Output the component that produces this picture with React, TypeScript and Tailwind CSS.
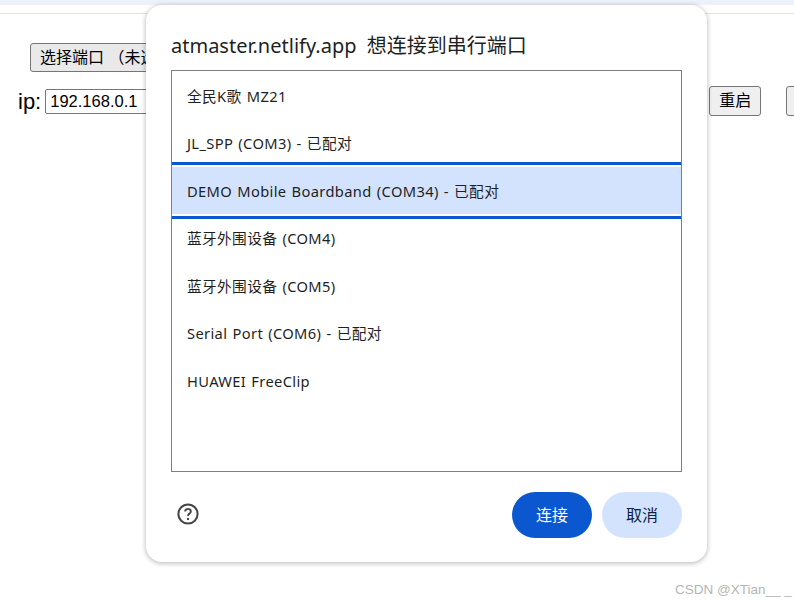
import React from 'react';

const ports = [
  '全民K歌 MZ21',
  'JL_SPP (COM3) - 已配对',
  'DEMO Mobile Boardband (COM34) - 已配对',
  '蓝牙外围设备 (COM4)',
  '蓝牙外围设备 (COM5)',
  'Serial Port (COM6) - 已配对',
  'HUAWEI FreeClip',
];

const uiFont = "font-['Noto_Sans','Noto_Sans_CJK_SC',sans-serif]";
const pageFont = "font-['Liberation_Sans','Noto_Sans_CJK_SC',sans-serif]";

const PortDialog = () => (
  <div
    className={`absolute left-[146px] top-[5px] w-[561px] h-[557px] bg-white rounded-[16px] shadow-[0_1px_4px_1px_rgba(0,0,0,0.22)] px-[25px] ${uiFont}`}
    role="dialog"
    aria-modal="true"
  >
    <h1 className="h-[65px] pt-[24px] text-[20px] leading-[34px] [word-spacing:5px] text-[#1f1f1f] whitespace-nowrap">
      atmaster.netlify.app 想连接到串行端口
    </h1>
    <div className="w-[511px] h-[402px] border border-[#7f7f7f] pt-[1px]">
      {ports.map((port, i) => (
        <div
          key={port}
          className="relative h-[47.5px] flex items-center px-[15px] text-[14.7px] tracking-[0.35px] [word-spacing:1px] text-[#1f1f1f] whitespace-nowrap"
        >
          {i === 2 && (
            <div className="absolute left-0 right-0 top-[-5px] bottom-[-4.5px] border-y-[3px] border-[#0b57d0] py-[2px]">
              <div className="h-full bg-[#d3e3fd]" />
            </div>
          )}
          <span className="relative">{port}</span>
        </div>
      ))}
    </div>
    <div className="flex items-center justify-between mt-[20px]">
      <svg width="24" height="24" viewBox="0 0 24 24" className="ml-[5px] mb-[2px] text-[#444746]" fill="none">
        <circle cx="12" cy="12" r="9.6" stroke="currentColor" strokeWidth="2" />
        <path
          d="M9.2 9.6c0-1.6 1.2-2.7 2.8-2.7s2.8 1.1 2.8 2.5c0 2.1-2.8 2.2-2.8 4.6"
          stroke="currentColor"
          strokeWidth="1.9"
        />
        <circle cx="12" cy="16.9" r="1.2" fill="currentColor" />
      </svg>
      <div className="flex gap-[10px]">
        <button className="w-[80px] h-[46px] rounded-full bg-[#0b57d0] text-white text-[16px]">连接</button>
        <button className="w-[80px] h-[46px] rounded-full bg-[#d3e3fd] text-[#0a1f44] text-[16px]">取消</button>
      </div>
    </div>
  </div>
);

export default function App() {
  return (
    <div className={`relative w-[794px] h-[603px] overflow-hidden bg-white ${pageFont}`}>
      <div className="h-[5px] bg-[#edf1fa]" />
      <div className="h-[9px] border-b border-[#e3e3e3]" />
      <div className="pl-[30px] pt-[29px]">
        <button className="w-[200px] h-[29px] text-left pl-[9px] bg-[#e9e9e9] border border-[#767676] rounded-[3px] text-[16px] text-black whitespace-nowrap">
          选择端口 （未选择）
        </button>
      </div>
      <div className="flex items-center pl-[18px] mt-[14px] h-[30px]">
        <span className="text-[22px] text-black mr-[4px]">ip:</span>
        <input
          readOnly
          value="192.168.0.1"
          className="w-[200px] h-[25px] px-[4px] border border-[#767676] rounded-[2px] text-[16.5px] text-black"
        />
        <button className="ml-[464px] shrink-0 w-[52px] h-[30px] bg-[#efefef] border border-[#767676] rounded-[3px] text-[16px] text-black">
          重启
        </button>
        <button
          aria-label="重启"
          className="ml-[25px] shrink-0 w-[52px] h-[30px] bg-[#efefef] border border-[#767676] rounded-[3px]"
        />
      </div>
      <PortDialog />
      <div className="absolute left-[675px] top-[581px] text-[13.5px] leading-[18px] text-[#b5b5b5] whitespace-nowrap">
        CSDN @XTian__ _
      </div>
    </div>
  );
}
